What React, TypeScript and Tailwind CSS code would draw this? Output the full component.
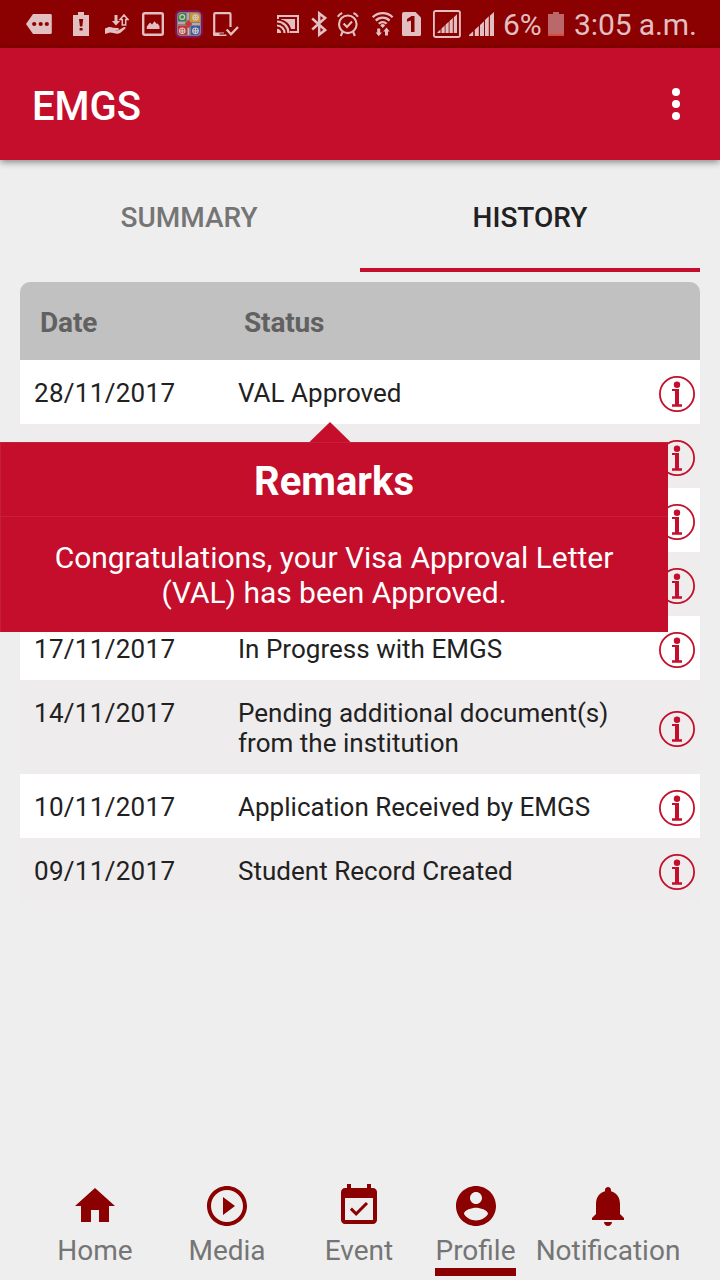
import type { ReactNode } from 'react'

type HistoryRow = { date: string; status: string }

const rows: HistoryRow[] = [
  { date: '28/11/2017', status: 'VAL Approved' },
  { date: '', status: '' },
  { date: '', status: '' },
  { date: '', status: '' },
  { date: '17/11/2017', status: 'In Progress with EMGS' },
  { date: '14/11/2017', status: 'Pending additional document(s) from the institution' },
  { date: '10/11/2017', status: 'Application Received by EMGS' },
  { date: '09/11/2017', status: 'Student Record Created' },
]

function StatusIcon({ width, className, children }: { width: number; className: string; children: ReactNode }) {
  return (
    <svg width={width} height="28" viewBox={`0 0 ${width} 28`} fill="currentColor" className={`shrink-0 ${className}`}>
      {children}
    </svg>
  )
}

function StatusBar() {
  return (
    <div className="flex h-12 items-center bg-[#8b0000] text-[#e2bfc0]">
      {/* message */}
      <StatusIcon width={26} className="ml-[26px]">
        <path d="M7 4h17.500a1.300 1.300 0 0 1 1.300 1.300v17.400a1.300 1.300 0 0 1-1.300 1.300H7L0 14z" />
        <g fill="#8b0000">
          <circle cx="8.200" cy="14" r="2.100" />
          <circle cx="14.700" cy="14" r="2.100" />
          <circle cx="20.800" cy="14" r="2.100" />
        </g>
      </StatusIcon>
      {/* low battery */}
      <StatusIcon width={16} className="ml-[21px]">
        <path d="M5 2h6v3h5v21H0V5h5z" />
        <path d="M6 9h4.200l-.9 7.500H6.900zM6.600 18h3v2.500h-3z" fill="#8b0000" />
      </StatusIcon>
      {/* data sharing */}
      <StatusIcon width={24} className="ml-4">
        <path d="M9.500 5h3v6h2.600L11 15.500 6.900 11h2.600z" />
        <path d="M17.300 15V9.500h-2.300L19 5l4 4.500h-2.300V15z" fill="none" stroke="currentColor" strokeWidth="1.500" />
        <path d="M0 18.500c3-2 6-2 8-.8l5 .3c1.300.2 1.200 1.700-.1 1.900l-3.400.4c3.500.7 5.500-1 9-3.100 1.500-.7 2.800.2 1.900 1.300l-4.900 4.300C12 25 8 22.500 5 22.500L0 24z" />
      </StatusIcon>
      {/* picture */}
      <StatusIcon width={22} className="ml-[13px]">
        <rect x="1.200" y="3.200" width="19.600" height="21.600" rx="1.500" fill="none" stroke="currentColor" strokeWidth="2.400" />
        <path d="M4.800 19v-2.500l3.200-4 2 2 2.500-3.200 2.300 2.700 1-.5 1.700 2.700V19z" />
      </StatusIcon>
      {/* ludo */}
      <StatusIcon width={28} className="ml-[11px]">
        <rect x="1" y="1" width="26" height="26" rx="5" fill="#8f7d86" stroke="#861358" strokeWidth="2" />
        <path d="M3 7a4 4 0 0 1 4-4h4v8H3z" fill="#2f8a44" />
        <path d="M15 3h6a4 4 0 0 1 4 4v5H15z" fill="#c9962a" />
        <path d="M3 16h9v9H7a4 4 0 0 1-4-4z" fill="#c8302c" />
        <path d="M16 16h9v5a4 4 0 0 1-4 4h-5z" fill="#2f5ea6" />
        <path d="M13.500 10l3.500 4-3.500 4-3.500-4z" fill="#c43a35" />
        <path d="M13 3v7M13.500 18v7M3 13h7M17 14h8" stroke="#c9b6ba" strokeWidth="1.400" />
        <g fill="none" stroke="#d6c3c5" strokeWidth="1.200">
          <circle cx="7.200" cy="7" r="2.400" />
          <circle cx="20.500" cy="7.500" r="2.600" />
          <circle cx="7.200" cy="20.800" r="2.800" />
          <circle cx="20.500" cy="20.800" r="2.800" />
          <path d="M4.400 20.800H10M7.200 18v5.600M17.700 20.800h5.600M20.500 18v5.600M17.900 7.500h5.200M20.500 5v5" />
        </g>
      </StatusIcon>
      {/* device check */}
      <StatusIcon width={26} className="ml-[10px]">
        <path d="M17.500 17V4.200a1 1 0 0 0-1-1H2.200a1 1 0 0 0-1 1v20h2" fill="none" stroke="currentColor" strokeWidth="2.200" />
        <path d="M.1 22.500H11v2h2.500V26H1.500A1.400 1.400 0 0 1 .1 24.500z" />
        <path d="M6.500 24h4.500" stroke="#8b0000" strokeWidth="1.200" />
        <path d="M13.700 19.500l4.300 4.800 7-7.300" fill="none" stroke="currentColor" strokeWidth="2.300" />
      </StatusIcon>
      {/* cast */}
      <StatusIcon width={22} className="ml-[38px]">
        <path d="M1 9V6h20v16h-8" fill="none" stroke="currentColor" strokeWidth="2" />
        <path d="M4 9h14v10h-4C13 14 9 10.500 4 9.500z" />
        <path d="M0 11.500A11.500 11.500 0 0 1 11.500 23M0 15.500A7.500 7.500 0 0 1 7.500 23" fill="none" stroke="currentColor" strokeWidth="2.200" />
        <path d="M0 18.800A4.200 4.200 0 0 1 4.200 23H0z" />
      </StatusIcon>
      {/* bluetooth */}
      <StatusIcon width={16} className="ml-3">
        <path d="M1.200 8.500L14.200 20l-6 4.600V3.400l6 4.600L1.200 19.500" fill="none" stroke="currentColor" strokeWidth="2.500" />
      </StatusIcon>
      {/* alarm */}
      <StatusIcon width={22} className="ml-[10px]">
        <g fill="none" stroke="currentColor" strokeWidth="2.100">
          <circle cx="10.800" cy="14.300" r="8.800" />
          <path d="M6.600 13.500l3.400 3.500 5-5.500M.8 6.800A9 9 0 0 1 5.200 3M16.500 3a9 9 0 0 1 4.400 3.800M5.500 22l-1.700 4M16.200 22l1.700 4" />
        </g>
      </StatusIcon>
      {/* wifi */}
      <StatusIcon width={22} className="ml-[13px]">
        <g fill="none" stroke="currentColor" strokeWidth="2.300">
          <path d="M.8 7.200a14 14 0 0 1 19.800 0M3.800 10.600a9.700 9.700 0 0 1 13.800 0M6.800 13.800a5.500 5.500 0 0 1 7.800 0" />
        </g>
        <path d="M8.200 15.400a3.500 3.500 0 0 1 5 0L10.700 18z" />
        <path d="M5.200 18.500h3v4H10l-3.200 3.700L3.600 22.500h1.600zM13 25.500h3v-4h1.700L14.500 17.500l-3.300 4H13z" />
      </StatusIcon>
      {/* sim */}
      <StatusIcon width={19} className="ml-2">
        <path d="M2 2h11.500L19 7.500v17a1.500 1.500 0 0 1-1.500 1.500h-16A1.500 1.500 0 0 1 0 24.500V4a2 2 0 0 1 2-2z" />
        <path d="M5 9l4.500-3h3v16H9V10.500L5 11.800z" fill="#8b0000" />
      </StatusIcon>
      {/* signal, primary sim */}
      <StatusIcon width={28} className="ml-3">
        <rect x=".9" y="1" width="26" height="26" rx="1.800" fill="none" stroke="currentColor" strokeWidth="1.900" />
        <path d="M4.500 23v-.8l3-2.700V23zM8.500 23v-4.500l3.200-3V23zM12.500 23v-8.200l3.200-3V23zM16.500 23V11l3.300-3v15zM20.800 23V7.200L24 4.300V23z" />
      </StatusIcon>
      {/* signal, second sim */}
      <StatusIcon width={25} className="ml-2">
        <path d="M0 26v-1l4.200-3.700V26zM5.800 26v-6.200l4-3.800v10zM11 26V15l4-3.800V26zM16 26V10l3.800-3.700V26zM20.900 26V5.800L25 2v24z" />
      </StatusIcon>
      <span className="ml-[9px] w-[38px] pt-px text-[30px] leading-none whitespace-nowrap">6%</span>
      <StatusIcon width={16} className="ml-[7px]">
        <path d="M5 2h6v2h5v20H0V4h5z" fill="#ba686a" />
        <path d="M0 24h16v2H0z" fill="#d94c35" />
      </StatusIcon>
      <span className="ml-[10px] pt-px text-[30px] leading-none tracking-[-0.1px] whitespace-nowrap">3:05 a.m.</span>
    </div>
  )
}

function InfoIcon() {
  return (
    <svg width="36" height="36" viewBox="0 0 36 36" className="shrink-0 text-[#c40e2b]">
      <circle cx="18" cy="18" r="17.100" fill="none" stroke="currentColor" strokeWidth="1.800" />
      <circle cx="18" cy="8.700" r="3.200" fill="currentColor" />
      <path d="M13 13h7v15.300h3v2.400H13v-2.400h3V15h-3z" fill="currentColor" />
    </svg>
  )
}

function NavItem({ label, icon, className, active }: { label: string; icon: string; className: string; active?: boolean }) {
  return (
    <div className={`flex h-[98px] shrink-0 flex-col items-center ${className}`}>
      <svg width="48" height="48" viewBox="0 0 24 24" fill="#8b0000">
        <path d={icon} />
      </svg>
      <span className="mt-1 h-[34px] text-[28px] leading-[34px] whitespace-nowrap text-[#757575]">{label}</span>
      {active && <div className="h-2 w-full bg-[#8b0000]" />}
    </div>
  )
}

export default function App() {
  return (
    <div className="relative flex h-[1280px] w-[720px] flex-col overflow-hidden bg-[#eeeeee] font-['Roboto',sans-serif]">
      <StatusBar />

      <header className="flex h-28 items-center justify-between bg-[#c40e2b] pr-10 pl-8 text-white shadow-[0_2px_7px_rgba(0,0,0,0.45)]">
        <h1 className="pt-[6px] text-[40px] leading-none font-medium">EMGS</h1>
        <div className="flex flex-col gap-1">
          <span className="size-2 rounded-full bg-white" />
          <span className="size-2 rounded-full bg-white" />
          <span className="size-2 rounded-full bg-white" />
        </div>
      </header>

      <div className="mx-5 grid h-28 grid-cols-2 text-[28px] font-medium">
        <div className="flex items-center justify-center pt-[3px] pr-[2px] text-[#757575]">SUMMARY</div>
        <div className="flex items-center justify-center border-b-4 border-[#c40e2b] pt-[7px] text-[#212121]">HISTORY</div>
      </div>

      <div className="mx-5 mt-[10px]">
        <div className="flex h-[78px] items-center rounded-t-[10px] bg-[#c1c1c1] pt-1 pl-5 text-[28px] font-bold tracking-[-0.15px] text-[#616161]">
          <span className="w-[204px]">Date</span>
          <span>Status</span>
        </div>
        {rows.map((row, i) => (
          <div
            key={i}
            className="flex min-h-16 items-center pr-[5px] pl-[14px] text-[26px] leading-[30px] text-[#212121] odd:bg-[#eeecec] even:bg-white"
          >
            <span className="w-[204px] shrink-0 self-start pt-[18px] tracking-[0.3px]">{row.date}</span>
            <span className="w-[400px] self-start pt-[18px] pb-4 tracking-[0.02px]">{row.status}</span>
            <div className="ml-auto pt-1">
              <InfoIcon />
            </div>
          </div>
        ))}
      </div>

      {/* remarks popover */}
      <div className="absolute top-[422px] left-0 flex w-[668px] flex-col text-center text-white">
        <svg width="42" height="20" viewBox="0 0 42 20" className="ml-[309px]">
          <path d="M21 0L41.500 20H.5z" fill="#c40e2b" />
        </svg>
        <div className="h-[75px] border-t border-b border-l border-[#c61f38] bg-[#c40e2b] pt-[2px] pr-px text-[40px] leading-[74px] font-bold">
          Remarks
        </div>
        <div className="h-[115px] border-l border-[#c61f38] bg-[#c40e2b] pt-[23px] pr-px text-[30px] leading-[35px] tracking-[-0.02px]">
          Congratulations, your Visa Approval Letter
          <br />
          (VAL) has been Approved.
        </div>
      </div>

      <nav className="mt-auto flex">
        <NavItem
          label="Home"
          className="ml-[55px] w-20"
          icon="M10 20v-6h4v6h5v-8h3L12 3 2 12h3v8z"
        />
        <NavItem
          label="Media"
          className="ml-[52px] w-20"
          icon="M10 16.500l6-4.500-6-4.500v9zM12 2C6.480 2 2 6.480 2 12s4.480 10 10 10 10-4.480 10-10S17.520 2 12 2zm0 18c-4.410 0-8-3.590-8-8s3.590-8 8-8 8 3.590 8 8-3.590 8-8 8z"
        />
        <NavItem
          label="Event"
          className="ml-[51px] w-[82px]"
          icon="M16.530 11.060L15.470 10l-4.880 4.880-2.120-2.120-1.060 1.060L10.590 17l5.940-5.940zM19 3h-1V1h-2v2H8V1H6v2H5c-1.110 0-1.990.9-1.990 2L3 19c0 1.100.89 2 2 2h14c1.100 0 2-.9 2-2V5c0-1.100-.9-2-2-2zm0 16H5V8h14v11z"
        />
        <NavItem
          label="Profile"
          active
          className="ml-[35px] w-[81px]"
          icon="M12 2C6.480 2 2 6.480 2 12s4.480 10 10 10 10-4.480 10-10S17.520 2 12 2zm0 3c1.660 0 3 1.340 3 3s-1.340 3-3 3-3-1.340-3-3 1.340-3 3-3zm0 14.200c-2.500 0-4.710-1.280-6-3.220.03-1.990 4-3.080 6-3.080 1.990 0 5.970 1.090 6 3.080-1.290 1.940-3.500 3.220-6 3.220z"
        />
        <NavItem
          label="Notification"
          className="ml-5 w-36"
          icon="M12 22c1.100 0 2-.9 2-2h-4c0 1.100.89 2 2 2zm6-6v-5c0-3.070-1.640-5.640-4.500-6.320V4c0-.83-.67-1.500-1.500-1.500s-1.500.67-1.500 1.500v.68C7.630 5.360 6 7.920 6 11v5l-2 2v1h16v-1l-2-2z"
        />
      </nav>
    </div>
  )
}
